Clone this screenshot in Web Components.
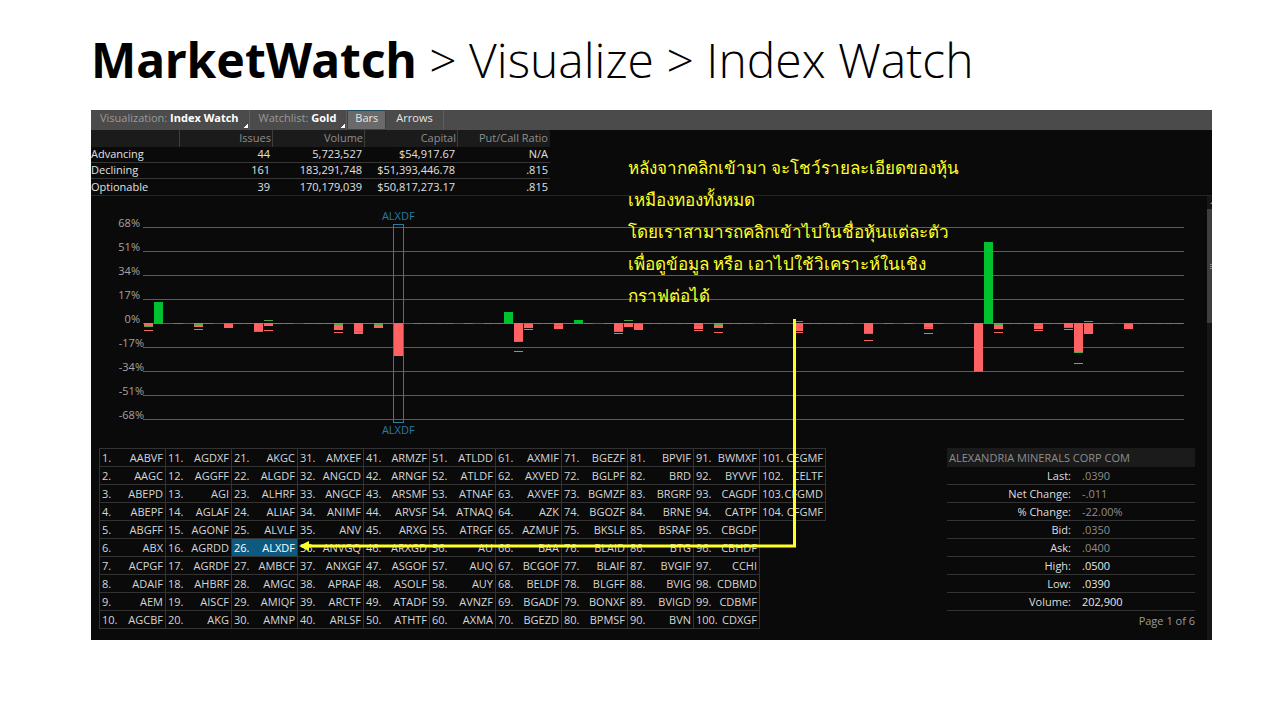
<!DOCTYPE html>
<html lang="en">
<head>
<meta charset="utf-8">
<title>MarketWatch - Index Watch</title>
<style>
html, body { margin: 0; background: #fff; }
body { font-family: "Open Sans", "Noto Sans", sans-serif; font-size: 11px; }
</style>
</head>
<body>
<index-watch-slide></index-watch-slide>
<script>
const define = (name, html, setup) => {
  const template = document.createElement('template');
  template.innerHTML = html;
  customElements.define(name, class extends HTMLElement {
    constructor() {
      super();
      this.attachShadow({ mode: 'open' }).append(template.content.cloneNode(true));
    }
    connectedCallback() {
      if (setup && !this.ready) { this.ready = true; setup(this.shadowRoot, this); }
    }
  });
};

/* Toolbar button; "menu" adds the drop-down corner, "active" the pressed look. */
define('tool-button', `
<style>
:host { display: flex; border-right: 1px solid #5e5e5e; }
button { position: relative; border: 1px solid transparent; background: none; margin: 0; padding: 0 9px 4px 9px;
  font: inherit; font-size: 11px; line-height: 14px; color: #e6e6e6; white-space: nowrap; }
:host([menu]) button { padding-left: 8px; padding-right: 9px; color: #9a9a9a; }
:host([menu]:first-child) button { padding-left: 5px; }
:host([active]) { border-right: 0; }
:host([active]) button { background: #6a6a6a; border-color: #1d4a66; padding: 0 7px 4px 7px; }
::slotted(b) { color: #fff; }
:host([menu]) button::after { content: ""; position: absolute; right: 0; bottom: 1px; width: 4px; height: 4px;
  background: linear-gradient(135deg, transparent 50%, #fff 50%); }
</style>
<button type="button"><slot></slot></button>`);

define('watch-toolbar', `
<style>
:host { display: flex; height: 20px; background: #4b4b4b; }
</style>
<tool-button menu>Visualization: <b>Index Watch</b></tool-button>
<tool-button menu>Watchlist: <b>Gold</b></tool-button>
<tool-button active>Bars</tool-button>
<tool-button>Arrows</tool-button>`);

define('market-summary', `
<style>
:host { display: block; border-bottom: 1px solid #262626; }
table { border-collapse: separate; border-spacing: 0; table-layout: fixed; width: 459px; }
th, td { box-sizing: border-box; padding: 0 2px 1px 0; text-align: right; font-weight: 400; font-size: 11px; line-height: 14px; }
thead th { background: #1b1b1b; color: #8e8e8e; line-height: 16px; border-right: 1px solid #3d3d3d; padding-right: 1px; }
thead th:last-child { border-right: 0; padding-right: 2px; }
tbody th { text-align: left; }
tbody th, tbody td { color: #e0e0e0; border-bottom: 1px solid #363636; }
tbody tr:last-child > * { border-bottom: 0; line-height: 16px; padding-bottom: 0; }
td:not(:last-child) { padding-right: 3px; }
</style>
<table>
<colgroup><col style="width:89px"><col style="width:93px"><col style="width:92px"><col style="width:93px"><col style="width:92px"></colgroup>
<thead><tr><th></th><th>Issues</th><th>Volume</th><th>Capital</th><th>Put/Call Ratio</th></tr></thead>
<tbody>
<tr><th scope="row">Advancing</th><td>44</td><td>5,723,527</td><td>$54,917.67</td><td>N/A</td></tr>
<tr><th scope="row">Declining</th><td>161</td><td>183,291,748</td><td>$51,393,446.78</td><td>.815</td></tr>
<tr><th scope="row">Optionable</th><td>39</td><td>170,179,039</td><td>$50,817,273.17</td><td>.815</td></tr>
</tbody>
</table>`);

/* Bars hang from the zero line. Per slot: bar extent, green tick, red mark (units below zero). */
const BARS = [
  [0, 0, 3, 3, 7], [1, -21, 0], [5, 0, 3, 1, 6], [8, 0, 4, 0], [11, 0, 8, 8], [12, 0, 2, -3, 7],
  [19, 0, 6, 1, 9], [21, 0, 10, 8], [23, 0, 4, 1], [25, 0, 32], [36, -11, 0], [37, 0, 18, 18, 28],
  [38, 0, 4, 0, 6], [41, 0, 5, 2], [43, -3, 0], [47, 0, 8, 8, 10], [48, 0, 3, -3], [49, 0, 6, 0],
  [55, 0, 5, 2, 7], [57, 0, 4, 1, 9], [65, 0, 7, -2, 9], [72, 0, 10, 10, 17], [78, 0, 5, 4, 10],
  [83, 0, 48, 48], [84, -81, 0], [85, 0, 5, 1, 9], [89, 0, 5, 2, 7], [92, 0, 4, 4, 6],
  [93, 0, 29, 29, 40], [94, 0, 10, -2], [98, 0, 5, 0]
];
const FLAT = [3, 6, 9, 10, 13, 14, 16, 17, 18, 22, 24, 27, 28, 29, 30, 32, 34, 35, 39, 40, 42, 44, 46,
  50, 51, 52, 53, 54, 56, 58, 59, 60, 62, 66, 67, 68, 69, 70, 74, 76, 79, 82, 86, 87, 88, 90, 91, 95, 96,
  99, 100, 101, 102, 103];

define('index-chart', `
<style>
:host { display: grid; grid-template-columns: 53px 1fr; padding: 19px 23px 17px 0; }
.axis { display: grid; grid-auto-rows: 24px; font-size: 11px; line-height: 16px; color: #a4a4a4; text-align: right; }
.axis span { padding-right: 4px; }
.axis .neg { padding-right: 0; }
.plot { position: relative; margin-left: -1px; height: 216px; }
svg { display: block; width: 100%; height: 216px; }
.mark { position: absolute; left: 24.52%; transform: translateX(-50%); color: #287ba5; font-size: 11px; line-height: 14px; }
.top { top: -6px; }
.bottom { bottom: -6px; }
</style>
<div class="axis"><span>68%</span><span>51%</span><span>34%</span><span>17%</span><span>0%</span><span class="neg">-17%</span><span class="neg">-34%</span><span class="neg">-51%</span><span class="neg">-68%</span></div>
<div class="plot"><svg viewBox="0 0 1041 216" preserveAspectRatio="none" shape-rendering="crispEdges" role="img" aria-label="Percent change by symbol"></svg><span class="mark top">ALXDF</span><span class="mark bottom">ALXDF</span></div>`,
root => {
  const rect = (x, y, w, h, fill) => `<rect x="${x}" y="${y}" width="${w}" height="${h}" fill="${fill}"/>`;
  const zero = 108;
  let out = '';
  for (let i = 0; i < 9; i++) out += rect(0, 12 + i * 24, 1041, 1, '#5c5c5c');
  for (const i of FLAT) out += rect(1 + i * 10, zero, 9, 1, '#1fae3e');
  for (const [i, from, to, tick, mark] of BARS) {
    const x = 1 + i * 10;
    out += rect(x, zero + from, 9, to - from + 1, from < 0 ? '#00c22e' : '#ff6262');
    if (tick !== undefined) out += rect(x, zero + tick, 9, 1, '#4fa545');
    if (mark !== undefined) out += rect(x, zero + mark, 9, 1, '#f46a60');
  }
  /* Selection frame, one unit thick on each side. */
  const blue = '#287ba5';
  out += rect(250, 9, 11, 1, blue) + rect(250, 207, 11, 1, blue) + rect(250, 9, 1, 199, blue) + rect(260, 9, 1, 199, blue);
  root.querySelector('svg').innerHTML = out;
});

const SYMBOLS = `AABVF AAGC ABEPD ABEPF ABGFF ABX ACPGF ADAIF AEM AGCBF
AGDXF AGGFF AGI AGLAF AGONF AGRDD AGRDF AHBRF AISCF AKG
AKGC ALGDF ALHRF ALIAF ALVLF ALXDF AMBCF AMGC AMIQF AMNP
AMXEF ANGCD ANGCF ANIMF ANV ANVGQ ANXGF APRAF ARCTF ARLSF
ARMZF ARNGF ARSMF ARVSF ARXG ARXGD ASGOF ASOLF ATADF ATHTF
ATLDD ATLDF ATNAF ATNAQ ATRGF AU AUQ AUY AVNZF AXMA
AXMIF AXVED AXVEF AZK AZMUF BAA BCGOF BELDF BGADF BGEZD
BGEZF BGLPF BGMZF BGOZF BKSLF BLAID BLAIF BLGFF BONXF BPMSF
BPVIF BRD BRGRF BRNE BSRAF BTG BVGIF BVIG BVIGD BVN
BWMXF BYVVF CAGDF CATPF CBGDF CBHDF CCHI CDBMD CDBMF CDXGF
CEGMF CELTF CFGMD CFGMF`.split(/\s+/);

define('symbol-grid', `
<style>
:host { display: block; }
table { border-collapse: collapse; table-layout: fixed; width: 727px; }
td { height: 17px; padding: 0; border: 1px solid #333; color: #d6d6d6; font-size: 11px; line-height: 17px; }
td.none { border-width: 0; }
td.on { background: #0d5a80; color: #fff; }
td div { display: flex; justify-content: space-between; padding: 0 2px; white-space: nowrap; }
</style>
<table><tbody></tbody></table>`,
root => {
  let rows = '';
  for (let r = 0; r < 10; r++) {
    rows += '<tr>';
    for (let c = 0; c < 11; c++) {
      const n = c * 10 + r, s = SYMBOLS[n];
      rows += s ? `<td${s === 'ALXDF' ? ' class="on"' : ''}><div><span>${n + 1}.</span><span>${s}</span></div></td>` : '<td class="none"></td>';
    }
    rows += '</tr>';
  }
  root.querySelector('tbody').innerHTML = rows;
});

define('quote-details', `
<style>
:host { display: block; width: 248px; font-size: 11px; color: #8e8e8e; }
table { width: 100%; border-collapse: separate; border-spacing: 0; table-layout: fixed; }
caption { background: #1b1b1b; line-height: 18px; text-align: left; padding: 1px 0 0 2px; }
th, td { padding: 0; height: 17px; line-height: 17px; border-bottom: 1px solid #333; font-weight: 400; }
th { color: #dedede; text-align: right; }
td { padding-left: 11px; }
.lit { color: #e6e6e6; }
p { margin: 0; line-height: 20px; text-align: right; color: #9a9a9a; }
</style>
<table>
<caption>ALEXANDRIA MINERALS CORP COM</caption>
<tbody>
<tr><th scope="row">Last:</th><td>.0390</td></tr>
<tr><th scope="row">Net Change:</th><td>-.011</td></tr>
<tr><th scope="row">% Change:</th><td>-22.00%</td></tr>
<tr><th scope="row">Bid:</th><td>.0350</td></tr>
<tr><th scope="row">Ask:</th><td>.0400</td></tr>
<tr><th scope="row">High:</th><td class="lit">.0500</td></tr>
<tr><th scope="row">Low:</th><td class="lit">.0390</td></tr>
<tr><th scope="row">Volume:</th><td class="lit">202,900</td></tr>
</tbody>
</table>
<p>Page 1 of 6</p>`);

define('scroll-rail', `
<style>
:host { display: flex; flex-direction: column; width: 5px; background: #161616; overflow: hidden; }
svg { display: block; }
.thumb { height: 114px; background: #3e3e3e; display: grid; align-items: center; justify-items: end; }
.grip { width: 2px; height: 5px; background: repeating-linear-gradient(#888 0 1px, transparent 1px 2px); }
</style>
<svg width="5" height="13" viewBox="0 0 5 13"><path d="M3 8l2-2v2z" fill="#888"/></svg>
<div class="thumb"><div class="grip"></div></div>`);

/* Yellow note and pointer laid over the panel. */
define('slide-note', `
<style>
:host { position: absolute; inset: 0; pointer-events: none; color: #ffff26; }
p { position: absolute; left: 537px; top: 42px; margin: 0; font-family: "Open Sans", sans-serif; font-size: 17px; font-weight: 300; line-height: 32px; white-space: nowrap; }
svg { position: absolute; left: 208px; top: 208px; }
</style>
<p lang="th">หลังจากคลิกเข้ามา จะโชว์รายละเอียดของหุ้น<br>เหมืองทองทั้งหมด<br>โดยเราสามารถคลิกเข้าไปในชื่อหุ้นแต่ละตัว<br>เพื่อดูข้อมูล หรือ เอาไปใช้วิเคราะห์ในเชิง<br>กราฟต่อได้</p>
<svg width="500" height="236" viewBox="0 0 500 236" aria-hidden="true"><path d="M495.5 1V228H9" fill="none" stroke="#ffff26" stroke-width="3"/><path d="M0 228l10-5v10z" fill="#ffff26"/></svg>`);

define('index-watch-slide', `
<style>
:host { display: block; }
h1 { margin: 0; padding: 27px 0 17px 91px; font-family: "Open Sans", sans-serif; font-size: 48px; line-height: 66px; font-weight: 300; color: #000; white-space: nowrap; }
h1 b { font-family: "Noto Sans", sans-serif; font-weight: 700; }
.panel { position: relative; margin: 0 68px 0 91px; background: #0a0a0a; overflow: hidden; }
.body { display: flex; }
.main { flex: 1; min-width: 0; }
.lists { display: flex; justify-content: space-between; padding: 0 12px 9px 8px; }
</style>
<h1><b>MarketWatch</b> &gt; Visualize &gt; Index Watch</h1>
<section class="panel">
<watch-toolbar></watch-toolbar>
<market-summary></market-summary>
<div class="body">
<div class="main">
<index-chart></index-chart>
<div class="lists"><symbol-grid></symbol-grid><quote-details></quote-details></div>
</div>
<scroll-rail></scroll-rail>
</div>
<slide-note></slide-note>
</section>`);
</script>
</body>
</html>
